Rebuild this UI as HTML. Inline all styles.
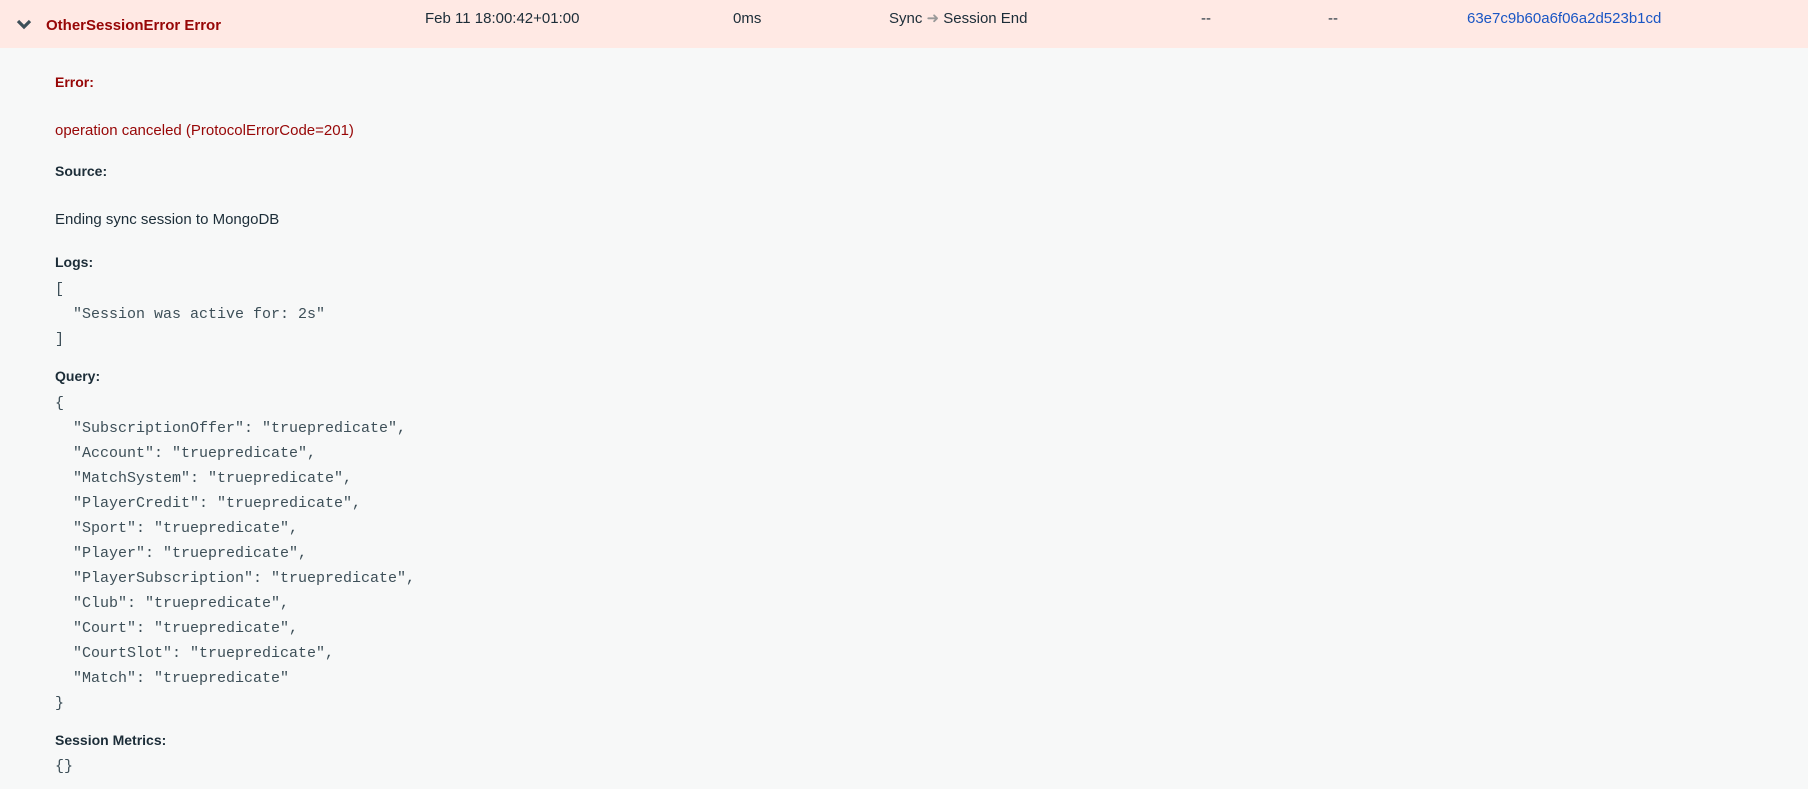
<!DOCTYPE html>
<html><head><meta charset="utf-8"><style>
body{margin:0;width:1808px;height:789px;background:#f7f8f8;font-family:"Liberation Sans",sans-serif;position:relative;overflow:hidden;color:#1c2d38}
.hdr{position:absolute;left:0;top:0;width:1808px;height:48px;background:#ffe9e4}
.t{position:absolute;white-space:nowrap;font-size:15px;line-height:20px}
.b{font-weight:bold}
.m{font-family:"Liberation Mono",monospace;font-size:15px;line-height:25px;white-space:pre;position:absolute;left:55px;color:#3d4f58}
</style></head><body>
<div class="hdr"></div>
<svg style="position:absolute;left:16px;top:19px" width="16" height="12" viewBox="0 0 16 12"><path d="M2 2 L8 8 L14 2" stroke="#3d4f58" stroke-width="3.2" fill="none"/></svg>
<div class="t b" style="left:46px;top:16px;color:#970606">OtherSessionError Error</div>
<div class="t" style="left:425px;top:9px">Feb 11 18:00:42+01:00</div>
<div class="t" style="left:733px;top:9px">0ms</div>
<div class="t" style="left:889px;top:9px">Sync <span style="color:#999">➜</span> Session End</div>
<div class="t" style="left:1201px;top:9px">--</div>
<div class="t" style="left:1328px;top:9px">--</div>
<div class="t" style="left:1467px;top:9px;color:#1a56c4">63e7c9b60a6f06a2d523b1cd</div>
<div class="t b" style="left:55px;top:72px;color:#970606;font-size:14px">Error:</div>
<div class="t" style="left:55px;top:121px;color:#970606">operation canceled (ProtocolErrorCode=201)</div>
<div class="t b" style="left:55px;top:161px;font-size:14px">Source:</div>
<div class="t" style="left:55px;top:210px">Ending sync session to MongoDB</div>
<div class="t b" style="left:55px;top:252px;font-size:14px">Logs:</div>
<div class="m" style="top:277px">[
  "Session was active for: 2s"
]</div>
<div class="t b" style="left:55px;top:366px;font-size:14px">Query:</div>
<div class="m" style="top:391px">{
  "SubscriptionOffer": "truepredicate",
  "Account": "truepredicate",
  "MatchSystem": "truepredicate",
  "PlayerCredit": "truepredicate",
  "Sport": "truepredicate",
  "Player": "truepredicate",
  "PlayerSubscription": "truepredicate",
  "Club": "truepredicate",
  "Court": "truepredicate",
  "CourtSlot": "truepredicate",
  "Match": "truepredicate"
}</div>
<div class="t b" style="left:55px;top:730px;font-size:14px">Session Metrics:</div>
<div class="m" style="top:754px">{}</div>
</body></html>
